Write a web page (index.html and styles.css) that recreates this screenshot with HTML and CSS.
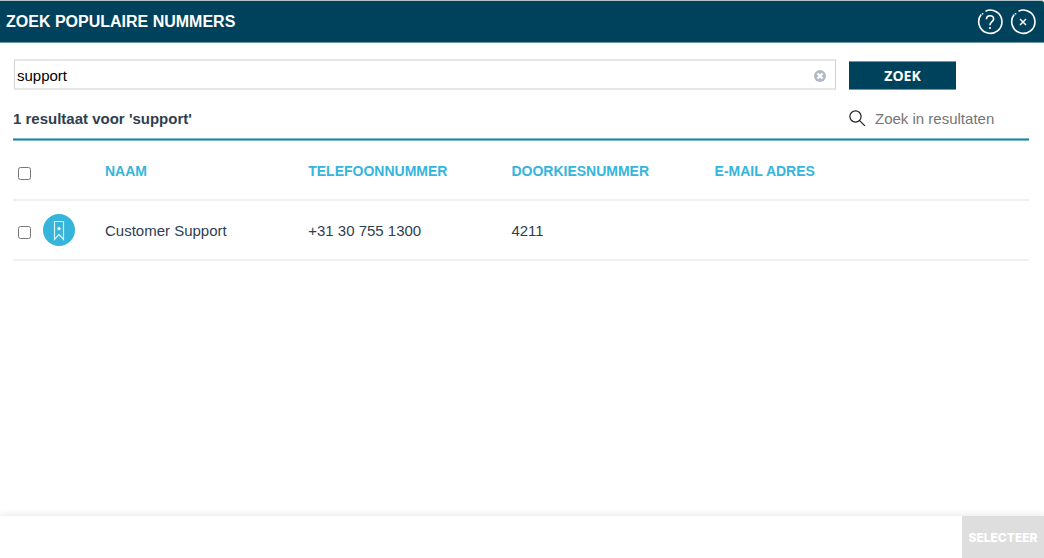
FILE: index.html
```html
<!DOCTYPE html>
<html lang="nl">
<head>
<meta charset="utf-8">
<title>Zoek populaire nummers</title>
<link rel="stylesheet" href="styles.css">
</head>
<body>
<div class="dialog">
  <header class="titlebar">
    <h1 class="title">ZOEK POPULAIRE NUMMERS</h1>
    <button class="title-button" type="button" aria-label="Help">
      <svg width="26" height="26" viewBox="0 0 26 26" fill="none" stroke="#fff" stroke-width="1.6">
        <path d="M8.500 2.200A11.600 11.600 0 1 1 4.200 5.600M5 5.200l1.200-.9"/>
        <path d="M9.500 10.300C9.500 8 11 6.800 13 6.800s3.600 1.200 3.600 3.200c0 2.700-3.600 2.800-3.600 6.200"/>
        <path d="M13 18v2"/>
      </svg>
    </button>
    <button class="title-button" type="button" aria-label="Sluiten">
      <svg width="26" height="26" viewBox="0 0 26 26" fill="none" stroke="#fff" stroke-width="1.6">
        <path d="M8.500 2.200A11.600 11.600 0 1 1 4.200 5.600M5 5.200l1.200-.9"/>
        <path d="M10 10l6 6M16 10l-6 6" stroke-width="1.500"/>
      </svg>
    </button>
  </header>
  <main class="content">
    <form class="search">
      <div class="search-box">
        <input class="search-input" type="text" value="support" aria-label="Zoekterm">
        <button class="clear" type="button" aria-label="Wissen">
          <svg width="12" height="12" viewBox="0 0 12 12">
            <circle cx="6" cy="6" r="6" fill="#b0b9c6"/>
            <path d="M3.500 3.500l5 5M8.500 3.500l-5 5" stroke="#fff" stroke-width="2.200"/>
          </svg>
        </button>
      </div>
      <button class="search-button" type="button">ZOEK</button>
    </form>
    <div class="results-bar">
      <h2 class="summary">1 resultaat voor 'support'</h2>
      <label class="filter">
        <svg width="18" height="18" viewBox="0 0 18 18" fill="none" stroke="#222" stroke-width="1.200">
          <circle cx="6.500" cy="6.500" r="5.600"/>
          <path d="M10.600 10.600l5.300 5.300"/>
        </svg>
        <input class="filter-input" type="text" placeholder="Zoek in resultaten" aria-label="Zoek in resultaten">
      </label>
    </div>
    <table class="results">
      <colgroup>
        <col class="col-check"><col class="col-icon"><col class="col-data"><col class="col-data"><col class="col-data"><col>
      </colgroup>
      <thead>
        <tr>
          <th><input class="check" type="checkbox" aria-label="Alles selecteren"></th>
          <th></th>
          <th>NAAM</th>
          <th>TELEFOONNUMMER</th>
          <th>DOORKIESNUMMER</th>
          <th>E-MAIL ADRES</th>
        </tr>
      </thead>
      <tbody>
        <tr>
          <td><input class="check" type="checkbox" aria-label="Customer Support selecteren"></td>
          <td>
            <svg width="32" height="32" viewBox="0 0 32 32">
              <circle cx="16" cy="16" r="16" fill="#35b5dc"/>
              <path d="M11.500 7.500h9v18l-4.500-5-4.500 5z" fill="none" stroke="#d9f2fa" stroke-width="1.200"/>
              <path d="M16 12.300l.7 1.400 1.600.2-1.200 1.100.3 1.600-1.400-.8-1.400.8.300-1.600-1.200-1.100 1.600-.2z" fill="#fff"/>
            </svg>
          </td>
          <td>Customer Support</td>
          <td>+31 30 755 1300</td>
          <td>4211</td>
          <td></td>
        </tr>
      </tbody>
    </table>
  </main>
  <footer class="footer">
    <button class="select-button" type="button" disabled>SELECTEER</button>
  </footer>
</div>
</body>
</html>
```
FILE: styles.css
```css
* {
  box-sizing: border-box;
}

body {
  margin: 0;
  background: #fff;
  color: #2f3e50;
  font-family: "Liberation Sans", Arial, sans-serif;
  font-size: 15px;
}

button {
  margin: 0;
  padding: 0;
  border: 0;
  background: none;
}

svg {
  display: block;
}

.dialog {
  display: flex;
  flex-direction: column;
  min-height: 100vh;
}

.titlebar {
  display: flex;
  align-items: center;
  gap: 7px;
  height: 43px;
  padding: 0 8px 0 6px;
  border-top: 1px solid #b0c0c6;
  border-bottom: 1px solid #6f97a9;
  border-top-right-radius: 3px;
  background: #00425c;
}

.title {
  flex: 1;
  margin: 0;
  color: #fff;
  font-size: 16px;
}

.content {
  flex: 1;
  padding: 16px 15px 0 13px;
}

.search {
  display: flex;
  align-items: flex-end;
  gap: 13px;
  margin-right: 73px;
}

.search-box {
  display: flex;
  flex: 1;
  align-items: center;
  height: 31px;
  margin-left: 1px;
  padding-right: 9px;
  border: 1px solid #d2d2d2;
  border-top: 2px solid #e6e6e6;
  border-bottom: 2px solid #e6e6e6;
}

.search-input {
  flex: 1;
  min-width: 0;
  padding: 1px 2px 0;
  border: 0;
  outline: 0;
  background: none;
  color: #000;
  font: 15px "Liberation Sans", Arial, sans-serif;
}

.clear {
  padding-top: 3px;
}

.search-button {
  width: 107px;
  height: 29px;
  border-top: 1px solid #6f97a9;
  border-bottom: 1px solid #6f97a9;
  background: #00425c;
  color: #fff;
  font: bold 14px "Open Sans", "Noto Sans", sans-serif;
}

.results-bar {
  display: flex;
  align-items: center;
  height: 48px;
  padding-top: 9px;
}

.summary {
  flex: 1;
  margin: 0;
  font-size: 15px;
}

.filter {
  display: flex;
  align-items: center;
  gap: 8px;
  width: 180px;
}

.filter-input {
  flex: 1;
  min-width: 0;
  padding: 0;
  border: 0;
  outline: 0;
  font: 15px "Liberation Sans", Arial, sans-serif;
}

.filter-input::placeholder {
  color: #757575;
}

/* The rule above the table is a dark line with a lighter one on each side. */
.results {
  width: 100%;
  border-spacing: 0;
  padding-top: 3px;
  background:
    linear-gradient(#1b8199, #1b8199) 0 1px / 100% 1px no-repeat,
    linear-gradient(#7fbccb, #7fbccb) 0 0 / 100% 3px no-repeat;
  table-layout: fixed;
  text-align: left;
}

.col-check {
  width: 30px;
}

.col-icon {
  width: 62px;
}

.col-data {
  width: 20%;
}

.results th,
.results td {
  height: 60px;
  padding: 0;
  border-bottom: 2px solid #f0f0f0;
}

.results th {
  padding-top: 2px;
  color: #35b5dc;
  font-size: 14px;
}

.check {
  display: block;
  margin: 5px 0 0 5px;
}

.footer {
  display: flex;
  justify-content: flex-end;
  box-shadow: 0 -2px 6px rgba(0, 30, 30, 0.08);
}

.select-button {
  width: 82px;
  height: 42px;
  background: #dedede;
  color: #fff;
  font: 800 12px Inter, sans-serif;
}
```
